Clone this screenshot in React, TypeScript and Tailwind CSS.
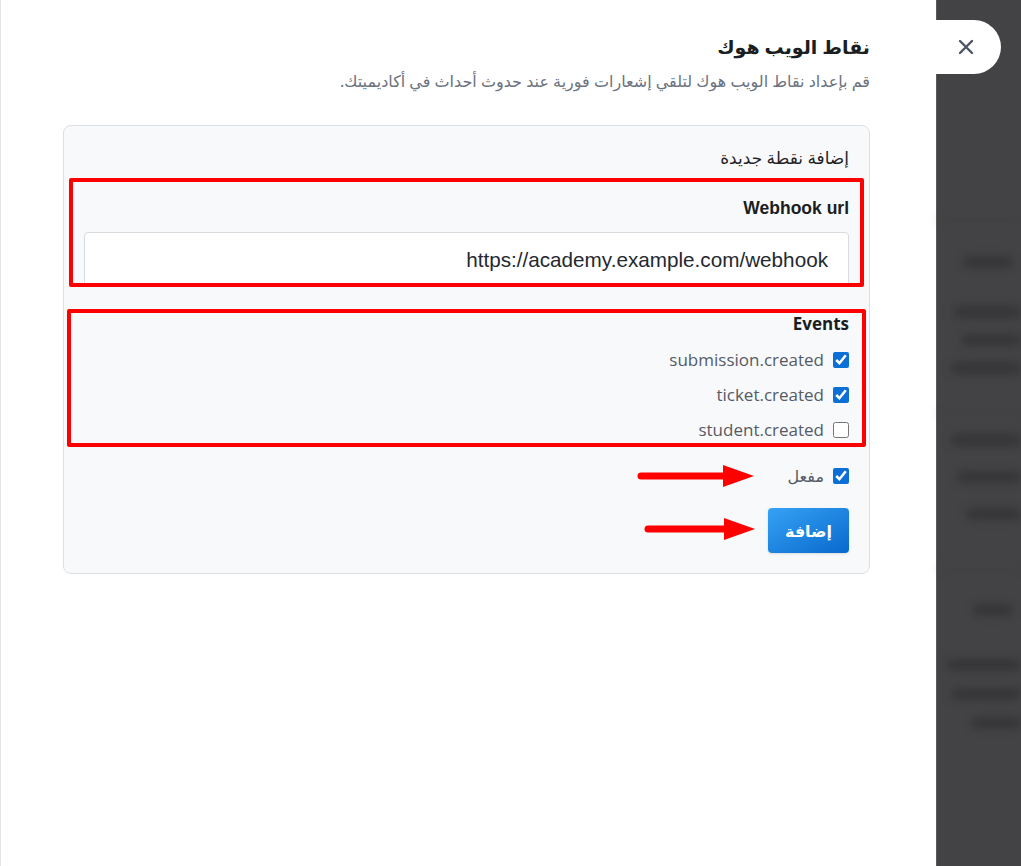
import React from 'react'

const events = [
  { name: 'submission.created', checked: true },
  { name: 'ticket.created', checked: true },
  { name: 'student.created', checked: false },
]

function Arrow({ width }: { width: number }) {
  return (
    <svg width={width} height="28" viewBox={`0 0 ${width} 28`}>
      <line x1="4" y1="14" x2={width - 30} y2="14" stroke="#f00" strokeWidth="7" strokeLinecap="round" />
      <polygon points={`${width - 32},3 ${width - 1},14 ${width - 32},25`} fill="#f00" />
    </svg>
  )
}

// الصفحة الضبابية تحت الطبقة الداكنة (أشكال فقط)
function Line({ w, mt }: { w: string; mt: string }) {
  return <div className={`h-[12px] rounded-full bg-[#363638] ${w} ${mt}`} />
}

function BehindOverlay() {
  return (
    <div className="flex flex-col items-end blur-[4px] h-full overflow-hidden">
      <div className="h-[220px] w-full border-b border-[#3d3d3f] shrink-0" />
      <div className="h-[12px] w-[50px] rounded-full bg-[#363638] mt-[36px] mr-[8px]" />
      <Line w="w-[68px]" mt="mt-[38px]" />
      <Line w="w-[60px]" mt="mt-[16px]" />
      <Line w="w-[70px]" mt="mt-[16px]" />
      <div className="h-[40px] w-full border-b border-[#3d3d3f] shrink-0" />
      <Line w="w-[70px]" mt="mt-[20px]" />
      <Line w="w-[64px]" mt="mt-[25px]" />
      <Line w="w-[55px]" mt="mt-[25px]" />
      <div className="h-[50px] w-full border-b border-[#3d3d3f] shrink-0" />
      <div className="h-[12px] w-[40px] rounded-full bg-[#363638] mt-[34px] mr-[8px]" />
      <Line w="w-[75px]" mt="mt-[43px]" />
      <Line w="w-[70px]" mt="mt-[17px]" />
      <Line w="w-[50px]" mt="mt-[17px]" />
    </div>
  )
}

export default function App() {
  return (
    <div className="relative flex w-[1021px] h-[866px] overflow-hidden bg-[#434345]">
      <div
        dir="rtl"
        className="w-[936px] h-full shrink-0 bg-white border-l border-[#e5e5e5] pr-[66px] pl-[62px] pt-[33px]"
        style={{ fontFamily: '"Noto Sans", "DejaVu Sans", sans-serif' }}
      >
        <h1 className="text-[19px] font-bold text-[#1a1d21] leading-[28px]">نقاط الويب هوك</h1>
        <p className="mt-[9px] text-[16px] text-[#6b7280] leading-[22px]">
          قم بإعداد نقاط الويب هوك لتلقي إشعارات فورية عند حدوث أحداث في أكاديميتك.
        </p>

        <div className="relative mt-[33px] rounded-lg border border-[#dcdfe3] bg-[#f8f9fa] px-[20px] pt-[21px] pb-[20px]">
          <div className="text-[17px] font-medium text-[#1f2328] leading-[22px]">إضافة نقطة جديدة</div>

          <div className="mt-[27px] text-[17.5px] font-bold text-[#1a1d21] leading-[24px]" style={{ fontFamily: '"Liberation Sans", sans-serif' }}>
            Webhook url
          </div>
          <div
            dir="ltr"
            className="mt-[12px] h-[55px] rounded-[4px] border border-[#d8dbe0] bg-white flex items-center justify-end pr-[20px] text-[20.7px] text-[#24292f]"
            style={{ fontFamily: '"Liberation Sans", sans-serif' }}
          >
            https://academy.example.com/webhook
          </div>

          <div className="mt-[25px] text-[17px] font-bold text-[#1a1d21] leading-[24px]" style={{ fontFamily: '"Open Sans", sans-serif' }}>
            Events
          </div>
          <div className="mt-[13px] flex flex-col gap-[13px]">
            {events.map((e) => (
              <label key={e.name} className="flex items-center gap-[9px] h-[22px]">
                <input type="checkbox" defaultChecked={e.checked} className="w-[16px] h-[16px] accent-[#0b6fd6]" />
                <span className="text-[17px] text-[#555b66]" style={{ fontFamily: '"Open Sans", sans-serif' }}>
                  {e.name}
                </span>
              </label>
            ))}
          </div>

          <label className="mt-[24px] flex items-center gap-[9px] h-[22px]">
            <input type="checkbox" defaultChecked className="w-[16px] h-[16px] accent-[#0b6fd6]" />
            <span className="text-[16px] text-[#555b66]">مفعل</span>
          </label>

          <button className="mt-[21px] w-[81px] h-[45px] rounded-[4px] bg-gradient-to-br from-[#35a2f5] to-[#0769cc] text-white text-[16px] font-bold shadow-sm">
            إضافة
          </button>

          {/* علامات التوضيح الحمراء */}
          <div className="pointer-events-none absolute top-[52px] right-[5px] w-[795px] h-[109px] border-[4px] border-[#f00] rounded-[2px]" />
          <div className="pointer-events-none absolute top-[183px] right-[3px] w-[799px] h-[138px] border-[4px] border-[#f00] rounded-[2px]" />
          <div className="pointer-events-none absolute top-[336px] left-[573px]">
            <Arrow width={118} />
          </div>
          <div className="pointer-events-none absolute top-[389px] left-[580px]">
            <Arrow width={112} />
          </div>
        </div>
      </div>

      <div className="flex-1 border-l border-[#5a5a5c] h-full">
        <BehindOverlay />
      </div>

      <button className="absolute top-[20px] left-[936px] w-[65px] h-[54px] rounded-r-full bg-white flex items-center justify-center pr-[6px]">
        <svg width="18" height="18" viewBox="0 0 18 18">
          <path d="M3 3 L15 15 M15 3 L3 15" stroke="#4b5563" strokeWidth="2.4" strokeLinecap="round" />
        </svg>
      </button>
    </div>
  )
}
